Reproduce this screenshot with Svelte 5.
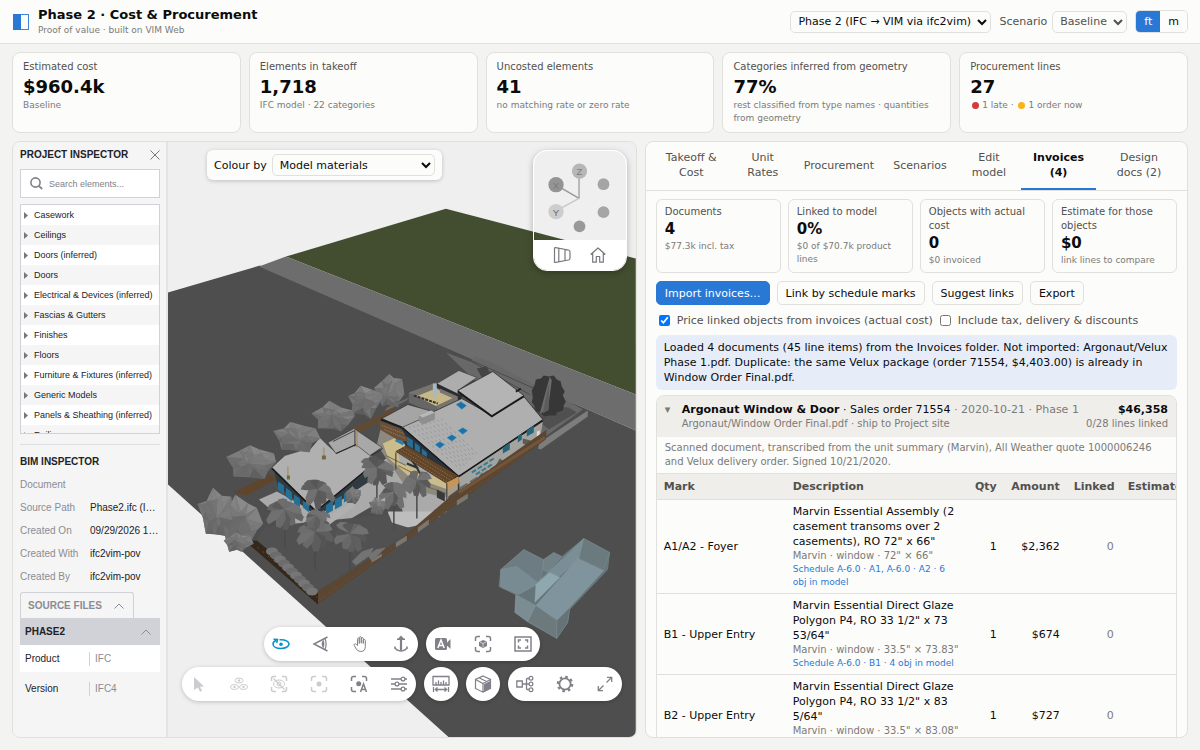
<script>
  const kpis = [
    { label: 'Estimated cost', value: '$960.4k', sub: 'Baseline' },
    { label: 'Elements in takeoff', value: '1,718', sub: 'IFC model · 22 categories' },
    { label: 'Uncosted elements', value: '41', sub: 'no matching rate or zero rate' },
    { label: 'Categories inferred from geometry', value: '77%', sub: 'rest classified from type names · quantities from geometry' },
    { label: 'Procurement lines', value: '27', flags: true }
  ];
  const tree = ['Casework', 'Ceilings', 'Doors (inferred)', 'Doors', 'Electrical & Devices (inferred)', 'Fascias & Gutters', 'Finishes', 'Floors', 'Furniture & Fixtures (inferred)', 'Generic Models', 'Panels & Sheathing (inferred)', 'Railings'];
  const bim = [
    ['Document', ''],
    ['Source Path', 'Phase2.ifc (I…'],
    ['Created On', '09/29/2026 1…'],
    ['Created With', 'ifc2vim-pov'],
    ['Created By', 'ifc2vim-pov']
  ];
  const tabs = ['Takeoff & Cost', 'Unit Rates', 'Procurement', 'Scenarios', 'Edit model', 'Invoices (4)', 'Design docs (2)'];
  const stats = [
    { label: 'Documents', value: '4', sub: '$77.3k incl. tax' },
    { label: 'Linked to model', value: '0%', sub: '$0 of $70.7k product lines' },
    { label: 'Objects with actual cost', value: '0', sub: '$0 invoiced' },
    { label: 'Estimate for those objects', value: '$0', sub: 'link lines to compare' }
  ];
  const lines = [
    { mark: 'A1/A2 - Foyer', desc: 'Marvin Essential Assembly (2 casement transoms over 2 casements), RO 72" x 66"', meta: 'Marvin · window · 72" × 66"', link: 'Schedule A-6.0 · A1, A-6.0 · A2 · 6 obj in model', qty: 1, amount: '$2,362', linked: 0 },
    { mark: 'B1 - Upper Entry', desc: 'Marvin Essential Direct Glaze Polygon P4, RO 33 1/2" x 73 53/64"', meta: 'Marvin · window · 33.5" × 73.83"', link: 'Schedule A-6.0 · B1 · 4 obj in model', qty: 1, amount: '$674', linked: 0 },
    { mark: 'B2 - Upper Entry', desc: 'Marvin Essential Direct Glaze Polygon P4, RO 33 1/2" x 83 5/64"', meta: 'Marvin · window · 33.5" × 83.08"', link: '', qty: 1, amount: '$727', linked: 0 }
  ];

  // Small deterministic generator so the planting is the same on every load.
  function rng(seed) {
    let s = seed;
    return () => {
      s = (s * 16807) % 2147483647;
      return s / 2147483647;
    };
  }
  const grey = (v) => `rgb(${v},${v},${v})`;
  const toPoints = (pts) => pts.map((p) => p.map((v) => v.toFixed(1)).join(',')).join(' ');

  function shrub(cx, cy, rx, ry, seed) {
    const r = rng(seed * 7919);
    const n = 11;
    const hub = [cx + (r() - 0.5) * rx * 0.6, cy + (r() - 0.5) * ry * 0.6];
    const ring = [];
    const mid = [];
    for (let i = 0; i < n; i++) {
      const a = (i / n) * Math.PI * 2 + (r() - 0.5) * 0.35;
      const k = i % 2 ? 0.72 + r() * 0.15 : 0.95 + r() * 0.2;
      const m = 0.3 + r() * 0.4;
      ring.push([cx + Math.cos(a) * rx * k, cy + Math.sin(a) * ry * k]);
      mid.push([cx + Math.cos(a + 0.3) * rx * m, cy + Math.sin(a + 0.3) * ry * m]);
    }
    const out = [{ pts: toPoints(ring), fill: grey(104) }];
    const add = (pts, dy) => out.push({ pts: toPoints(pts), fill: grey(Math.round(108 + r() * 16 - dy * 16)) });
    for (let i = 0; i < n; i++) {
      const j = (i + 1) % n;
      const dy = Math.sin((i / n) * Math.PI * 2);
      add([ring[i], ring[j], mid[i]], dy);
      add([mid[i], ring[j], mid[j]], dy * 0.7);
      add([mid[i], mid[j], hub], dy * 0.4);
    }
    return out;
  }

  function palm(cx, cy, rad, seed) {
    const r = rng(seed * 104729);
    const out = [];
    for (let i = 0; i < 10; i++) {
      const a = (i / 10) * Math.PI * 2 + r() * 0.5;
      const l = rad * (0.7 + r() * 0.35);
      const w = rad * 0.26;
      const tx = cx + Math.cos(a) * l;
      const ty = cy + Math.sin(a) * l * 0.85 + 4;
      const mx = cx + Math.cos(a) * l * 0.6;
      const my = cy + Math.sin(a) * l * 0.5;
      const nx = -Math.sin(a) * w;
      const ny = Math.cos(a) * w;
      out.push({
        pts: toPoints([[cx, cy], [mx + nx, my + ny], [tx + nx * 0.5, ty + ny * 0.5], [tx - nx * 0.5, ty - ny * 0.5], [mx - nx, my - ny]]),
        fill: grey(Math.round(84 + r() * 32))
      });
    }
    return out;
  }

  const shrubs = [
    ...shrub(390, 392, 15, 18, 3), ...shrub(365, 402, 17, 17, 8), ...shrub(334, 418, 21, 15, 5),
    ...shrub(296, 438, 23, 15, 12), ...shrub(252, 463, 25, 18, 21), ...shrub(216, 514, 17, 25, 9),
    ...shrub(240, 522, 22, 24, 31), ...shrub(238, 543, 14, 10, 17), ...shrub(353, 496, 8, 9, 40), ...shrub(378, 507, 9, 9, 41)
  ];
  const palmSpots = [[377, 468, 19], [417, 481, 17], [394, 492, 17], [318, 490, 18], [285, 510, 20], [315, 532, 21], [350, 534, 20], [316, 516, 14]];
  const palms = palmSpots.flatMap(([x, y, s], i) => palm(x, y, s, i + 3));
  const hedge = Array.from({ length: 11 }, (_, i) => [272 + i * 4, 552 + i * 4]);
  const roofRows = Array.from({ length: 9 }, (_, i) => i);
</script>

<div class="page">
  <header>
    <svg class="logo" viewBox="0 0 16 16" aria-hidden="true"><rect x="0.5" y="0.5" width="15" height="15" fill="#fcfcfb" stroke="#3f83d8" /><rect width="8" height="16" fill="#2a78d6" /></svg>
    <div class="brand">
      <h1>Phase 2 · Cost &amp; Procurement</h1>
      <p>Proof of value · built on VIM Web</p>
    </div>
    <select class="model" aria-label="Model"><option>Phase 2 (IFC → VIM via ifc2vim)</option></select>
    <div class="scenario">
      <label for="scenario">Scenario</label>
      <select id="scenario"><option>Baseline</option></select>
    </div>
    <div class="units"><button class="on">ft</button><button>m</button></div>
  </header>

  <section class="kpis">
    {#each kpis as k}
      <article class="card kpi">
        <div class="label">{k.label}</div>
        <div class="value">{k.value}</div>
        {#if k.flags}
          <div class="sub"><i class="dot late"></i>1 late · <i class="dot soon"></i>1 order now</div>
        {:else}
          <div class="sub">{k.sub}</div>
        {/if}
      </article>
    {/each}
  </section>

  <main>
    <section class="viewer">
      <aside>
        <div class="head">
          <h2>PROJECT INSPECTOR</h2>
          <button aria-label="Close"><svg width="10" height="10" viewBox="0 0 10 10"><path d="M0.5 0.5l9 9M9.5 0.5l-9 9" stroke="#77787d" fill="none" /></svg></button>
        </div>
        <label class="search">
          <svg width="13" height="13" viewBox="0 0 13 13"><circle cx="5.5" cy="5.5" r="4.6" fill="none" stroke="#808188" stroke-width="1.6" /><path d="M8.8 8.8l3.4 3.2" stroke="#808188" stroke-width="1.8" /></svg>
          <input type="text" placeholder="Search elements..." aria-label="Search elements" />
        </label>
        <ul class="tree">
          {#each tree as t}
            <li><svg width="4" height="7" viewBox="0 0 4 7"><path d="M0 0l4 3.5L0 7z" fill="#77787d" /></svg>{t}</li>
          {/each}
        </ul>
        <hr />
        <h2 class="bimtitle">BIM INSPECTOR</h2>
        <dl>
          {#each bim as [k, v]}
            <dt>{k}</dt><dd>{v}</dd>
          {/each}
        </dl>
        <button class="files">SOURCE FILES <svg width="10" height="6" viewBox="0 0 10 6"><path d="M0.5 5.5L5 1l4.500 4.500" fill="none" stroke="#8b8c92" /></svg></button>
        <button class="group">PHASE2 <svg width="10" height="6" viewBox="0 0 10 6"><path d="M0.500 5.500L5 1l4.500 4.500" fill="none" stroke="#8b8c92" /></svg></button>
        <div class="prop white"><span>Product</span><span>IFC</span></div>
        <div class="prop"><span>Version</span><span>IFC4</span></div>
      </aside>

      <div class="canvas">
        <svg class="scene" viewBox="168 142 468 596" preserveAspectRatio="xMidYMid slice" aria-label="3D model">
          <rect x="0" y="0" width="1200" height="900" fill="#efefef" />
          <path d="M168 293L260 266L636 431V738H449L168 485z" fill="#4e4e4e" />
          <path d="M286 257L446 209L636 259V395z" fill="#434e30" />
          <path d="M259 267L286 257L636 395V431z" fill="#6d6d6d" />
          <path d="M446 353l24 9 6-5 20 8 40 21 30 14 17 10-47 34-12-8 30-20-80-36z" fill="#686868" />
          <path d="M449 351l90 40M470 361l60 34" stroke="#4b4b4b" fill="none" />
          <path d="M588 411L540 443l-2 6 3 1 47-33z" fill="#7d7d7d" />
          <path d="M545 406l24 2 8 5-28 17-12-10z" fill="#505050" />
          <!-- rear fences -->
          <path d="M233 493L270 475l8 4-31 17z" fill="#5f452c" />
          <path d="M350 430L381 415l10-7 6 4-38 22z" fill="#604a34" />
          <path d="M385 412l22-11 2-3-22 10z" fill="#706a62" />
          <!-- paving around the buildings -->
          <path d="M259 500l18-8 40 22 40-26 40-40 30 10 22 34-2 20-22 12q-16 5-20-6l-5-14-30 4-34 20-22-4-20 6z" fill="#aaaaaa" />
          <path d="M388 512l54 0-2 5-24 11q-16 2-26-6z" fill="#bdbdbd" />
          <!-- upper terrace -->
          <path d="M409 393L436 383l27 13-7 10-22 8-25-13z" fill="#77736d" />
          <path d="M416 397l20-8 18 9-19 9z" fill="#c6b887" />
          <path d="M409 393l28 14v9l-28-13z" fill="#666" />
          <path d="M414 396l24 8" stroke="#333" stroke-width="2" stroke-dasharray="3 1" />
          <path d="M433 384h4v14h-4z" fill="#a5b8c4" />
          <!-- back wing -->
          <path d="M437 384l22-13 18 7-19 13 1 8z" fill="#adadad" stroke="#292929" stroke-width="0.5" />
          <path d="M437 384l23 11 3 1-3 6-23-14z" fill="#2c2c2c" />
          <path d="M440 389l18 8v4l-18-8z" fill="#777" />
          <!-- courtyard -->
          <path d="M382 424l22 8 5 15-12 6 2 14 54 22-8 9-38-9-22-32-8-12z" fill="#8d897e" />
          <path d="M383 444l13-6 13 6-11 7 2 12 48 20v7l-40-14-20-18z" fill="#cbbd8b" />
          <path d="M386 456l20 10M398 466l18 9M424 486l22 8" stroke="#77663d" />
          <path d="M396 440l8 4" stroke="#2d7eb5" stroke-width="4" />
          <path d="M407 464l10 4 3 6M412 461l6 8" stroke="#303030" stroke-width="2" fill="none" />
          <!-- main roof -->
          <path d="M401 428l58 49v14l-48-35-12-22z" fill="#263541" />
          <path d="M407 437l6 4v9l-6-5zM415 443l5 4v8l-5-4zM422 449l5 4v6l-5-4z" fill="#286f97" />
          <path d="M459 477l84-55-3 19-80 49z" fill="#a3a49f" />
          <path d="M402 427L462 399l30 17 32-19 19 23-84 57z" fill="#afafaf" stroke="#202020" stroke-width="0.7" />
          <path d="M402 428L459 477L543 421" stroke="#1a1a1a" stroke-width="1.500" fill="none" />
          <path d="M458 391l35-19 31 24-32 20z" fill="#b4b4b4" stroke="#202020" stroke-width="0.700" />
          <path d="M458 392l34 25 32-20" stroke="#181818" stroke-width="1.600" fill="none" />
          <path d="M516 392l5-3" stroke="#222" stroke-width="2" />
          {#each roofRows as i}
            <path d={`M${409 + i * 4} ${427 - i}L${461 + i * 2} ${470 - i * 2}`} stroke="#8d8d8d" stroke-width="0.700" stroke-dasharray="3 3" fill="none" />
          {/each}
          <path d="M456 405l5-3 6 4-5 4zM458 431l5-3 5 3-5 4zM447 438l5-3 5 3-5 4zM435 445l5-3 5 3-5 4z" fill="#216fa3" stroke="#65b4d8" stroke-width="0.500" />
          <!-- front windows -->
          <path d="M527 431l7-5v7l-7 4zM503 448l7-5v7l-7 4zM518 437l4-3v6l-4 3z" fill="#24677c" />
          <path d="M472 473l22-14M476 475l16-10" stroke="#347d94" stroke-width="2" stroke-dasharray="5 2" />
          <path d="M460 489l78-48" stroke="#6b6963" stroke-width="2" stroke-dasharray="9 3" />
          <path d="M476 481l6-8 3 5zM494 469l6-10 6 4zM523 444l8 4v-7l-8-2z" fill="#5d5d55" />
          <path d="M537 432l3-1v7h-3z" fill="#ddd" />
          <!-- side roof and chimney -->
          <path d="M382 419L408 405l25 7-13 8-18 8z" fill="#a5a5a5" stroke="#222" stroke-width="0.600" />
          <path d="M381 420l21 8" stroke="#1c1c1c" stroke-width="2" />
          <path d="M419 416l12-5 4 2v7l-12 5-4-3z" fill="#8f8f8f" /><path d="M419 416l12-5 4 2-12 5z" fill="#b8b8b8" />
          <!-- pergolas -->
          <path d="M380 422l22 8 8 13-13-3-17-10z" fill="#6b5038" />
          <path d="M382 426l22 8M384 430l22 9" stroke="#ab8962" stroke-width="0.800" stroke-dasharray="1 1" />
          <path d="M396 452l11-6 51 30-11 8z" fill="#604529" stroke="#3a2a1c" stroke-width="0.600" />
          <path d="M398 452l50 31M401 450l50 31M404 448l50 31" stroke="#8d6b49" stroke-width="1" stroke-dasharray="1.500 1.300" />
          <path d="M447 484l11-7v13l-11 8z" fill="#aa9c85" /><path d="M447 483l12-6v7l-12 5z" fill="#c99556" />
          <path d="M396 453v17M447 484v26" stroke="#333" />
          <path d="M437 490l8 4v8l-8-4z" fill="#38393a" />
          <!-- second building -->
          <path d="M274 471l43 40 54-42v12l-48 32-10 1-35-27z" fill="#303b41" />
          <path d="M278 482l6 4v9l-6-5zM286 488l6 5v9l-6-5zM294 495l6 4v9l-6-4zM303 501l6 4v8l-6-5zM326 506l7-5v10l-7 4zM335 500l7-4v10l-7 4zM344 494l8-5v10l-8 4z" fill="#266f97" />
          <path d="M272 468l13-12 20-6 5 0 10-12 8 8 9 8 20-9 17 12-4 11-53 44z" fill="#b0b0b0" stroke="#333" stroke-width="0.500" />
          <path d="M272 469l44 43 55-45" stroke="#191919" stroke-width="1.600" fill="none" />
          <path d="M328 443l26-14 28 19-12 8-14-11-20 9z" fill="#a8a8a8" stroke="#333" stroke-width="0.600" />
          <path d="M333 442l22-11v16M356 445l-20 9M370 457l13-8" stroke="#222" fill="none" stroke-width="0.800" />
          <path d="M324 448v10M288 467v12M357 432v16" stroke="#a18e60" stroke-width="1.200" />
          <path d="M322 456h4v4h-4zM287 476h3v4h-3z" fill="#756840" />
          <!-- lawn and street fences -->
          <path d="M256 541L265 527l62-6 62-6 3 8 16 5 14-3-104 66z" fill="#515151" />
          <path d="M323 520l32-20 2 5-30 22z" fill="#b0b0b0" />
          <path d="M447 500l100-70-1 10-228 165v-13l80-50z" fill="#5b4632" />
          <path d="M459 493l86-55" stroke="#74553a" stroke-width="3" />
          <path d="M318 602l228-164" stroke="#7b624a" stroke-width="0.600" stroke-dasharray="1 2" />
          <path d="M396 543l11-7v5l-11 7zM418 528l11-8v5l-11 8zM457 501l11-7v5l-11 7zM372 560l10-6v3l-10 6z" fill="#7c776e" />
          <path d="M250 541h7l61 51v13L249 545z" fill="#352719" />
          <path d="M252 543l65 55" stroke="#5a5047" stroke-dasharray="2 5" />
          {#each hedge as [x, y], i}
            <ellipse cx={x} cy={y} rx="6" ry="4" fill={i % 2 ? '#6c6c6c' : '#767676'} />
          {/each}
          <path d="M352 562l10-10 12-4-4 8-14 10zM368 556l8-6 10-2-14 14z" fill="#737373" />
          {#each palmSpots as [x, y]}
            <path d={`M${x} ${y}v38`} stroke="#4a4a4a" stroke-width="1.500" />
          {/each}
          {#each shrubs as f}<polygon points={f.pts} fill={f.fill} />{/each}
          {#each palms as f}<polygon points={f.pts} fill={f.fill} />{/each}
          <!-- street tree -->
          <path d="M532 391l3-6 1-5 5-1 3-3 5 1 5-1 3 4 4 2 1 5 3 5-2 4 3 6-2 4-1 5-6 2-1 3-7 0-5 1-3-4-5-1-1-5-3-4 1-5z" fill="#373737" />
          <path d="M550 377l-10 37 8-3 4-30z" fill="#6b6b6b" /><path d="M549 384l-6 30 6-4z" fill="#5c5c5c" />
          <path d="M477 369l10-2 3 7-8 4z" fill="#444" />
          <!-- ghosted massing -->
          <g stroke="#9db0b6" stroke-width="0.500" stroke-opacity="0.400">
            <path d="M501 570l23-20 20 10 10-7 8 4 22-18 26 14-2 17-38 40-2 13-11 16-30-17-12-9 1-18-17-8z" fill="#66757a" />
            <path d="M524 550l20 11-3 19-17 7-8 8-15-7v-18z" fill="#6c7c82" />
            <path d="M501 570l16-3 22 17-20 11-18-8z" fill="#788b92" />
            <path d="M538 583l46-44-5 20-42 39z" fill="#7a8e95" />
            <path d="M578 559l26 12-46 50-22-15z" fill="#7f949c" />
            <path d="M584 539l26 14-6 18-25-12z" fill="#6b7a7f" />
            <path d="M536 585l14-12 10 5-25 25z" fill="#8fa7ae" />
            <path d="M516 595l20 11-8 16-13-9z" fill="#7b8d93" />
            <path d="M536 606l21 15v18l-29-17z" fill="#6c797d" />
            <path d="M557 621l13-13-2 15-11 16z" fill="#657377" />
            <path d="M544 560l10-7 8 4-14 16-5-3z" fill="#718287" />
          </g>
        </svg>

        <label class="colour">Colour by
          <select><option>Model materials</option></select>
        </label>

        <div class="gizmo">
          <svg viewBox="533 151 94 90" class="axes" aria-label="Axes">
            <path d="M579 199V171" stroke="#a6a6a6" stroke-width="1.500" /><path d="M579 199L555 185" stroke="#999" stroke-width="1.500" /><path d="M579 199L555 212" stroke="#c8c8c8" stroke-width="1.500" />
            <circle cx="579.500" cy="171" r="7.800" fill="#b7b7b7" /><circle cx="555.500" cy="185" r="7.800" fill="#949494" /><circle cx="555.500" cy="212.500" r="7.800" fill="#cdcdcd" />
            <circle cx="604" cy="184.500" r="6" fill="#a5a5a5" /><circle cx="604" cy="213" r="6" fill="#a5a5a5" /><circle cx="579.500" cy="227.500" r="6" fill="#999" />
            <text x="579.500" y="175" fill="#7b7b7b">Z</text><text x="555.500" y="189" fill="#7b7b7b">X</text><text x="555.500" y="216.500" fill="#6a6a6a">Y</text>
          </svg>
          <div class="views">
            <button aria-label="Projection"><svg width="18" height="16" viewBox="0 0 18 16"><path d="M1.500 1.500Q1 .6 2.500.7L15.500 3q1.500.4 1.500 2v6q0 1.600-1.500 2L2.500 15.300Q1 15.400 1.500 14zM5.800 1.500v13M12 2.800v10.500" /></svg></button>
            <button aria-label="Home"><svg width="16" height="16" viewBox="0 0 16 16"><path d="M.7 7.500L8 1l7.300 6.500M2.700 6v9.200h3.600V9.500h3.400v5.700h3.600V6" /></svg></button>
          </div>
        </div>

        <div class="tools">
          <div class="row">
            <div class="pill">
              <button aria-label="Orbit"><svg class="blue" viewBox="0 0 18 18"><path d="M4.500 5.200C2.300 6 1 7.400 1 9 1 11.800 4.600 13.500 9 13.500s8-1.800 8-4.400S13.400 4.700 9 4.700H7.500" stroke-width="1.500" /><path d="M1.500 4.200l4 .3-.8 3.500" stroke-width="1.500" /><circle class="f" cx="9" cy="9.200" r="1.700" /></svg></button>
              <button aria-label="Look"><svg viewBox="0 0 18 18"><path d="M15.500 2L2 9l13.500 7" stroke-width="1.500" /><path class="f" d="M11.300 4.500q2.200 4.500 0 9-3.200-4.500 0-9z" /><path d="M13 3.700q2.200 5.300 0 10.600" stroke-width="1.200" /></svg></button>
              <button aria-label="Pan"><svg viewBox="0 0 18 18"><path d="M5.500 10.500V4.200q0-1 .9-1t.9 1V8.500V2.700q0-1 1-1t1 1v5.500V3.500q0-1 1-1t1 1v5V5.500q0-1 1-1t1 1V11.500q0 5-4.500 5-3 0-4.500-2.500L2.300 10.500q-.6-1 .3-1.500t1.600.3z" /></svg></button>
              <button aria-label="Zoom"><svg viewBox="0 0 18 18"><path d="M9 2.500v13" stroke-width="2.200" /><path d="M5 4.300h8M6.500 4.300L9 1.700l2.500 2.600M3 12.500q1 3 6 3.500 5-.5 6-3.500M3 11.500v2.500M15 11.500v2.500" stroke-width="1.500" /></svg></button>
            </div>
            <div class="pill">
              <button aria-label="Auto camera"><svg viewBox="0 0 18 18"><rect class="f" x="1" y="3" width="12" height="12" rx="1.500" /><path class="f" d="M13 7.500L16.500 4v10L13 10.500z" /><path class="cut" d="M3.800 13L7 5l3.200 8M5 10.500h4" stroke-width="1.500" /></svg></button>
              <button aria-label="Frame selection"><svg viewBox="0 0 18 18"><path d="M1.500 6V3.500q0-2 2-2H6M12 1.500h2.500q2 0 2 2V6M16.500 12v2.500q0 2-2 2H12M6 16.500H3.500q-2 0-2-2V12" stroke-width="1.500" /><path class="f" d="M5 7l4-2 4 1.500v4.500L9 13l-4-2z" /><path class="cut" d="M9 8.500V12M6 7l3 1.500 4-2" stroke-width=".6" /></svg></button>
              <button aria-label="Frame scene"><svg viewBox="0 0 18 18"><path d="M1 2h16v14H1z" stroke-width="1.500" /><path d="M4.500 7.500V5H7M11 5h2.500v2.500M13.500 10.500V13H11M7 13H4.500v-2.500" stroke-width="1.500" /></svg></button>
            </div>
          </div>
          <div class="row">
            <div class="pill">
              <button disabled aria-label="Select"><svg viewBox="0 0 18 18"><path class="f" d="M4 2l10 9.500-4 .3 2 4-2 1-2-4.200L4 15z" /></svg></button>
              <button disabled aria-label="Show"><svg viewBox="0 0 18 18"><ellipse cx="9" cy="5.500" rx="4" ry="2.500" /><ellipse cx="4.500" cy="12" rx="4" ry="2.500" /><ellipse cx="13.500" cy="12" rx="4" ry="2.500" /><circle class="f" cx="9" cy="5.500" r="1.200" /><circle class="f" cx="4.500" cy="12" r="1.200" /><circle class="f" cx="13.500" cy="12" r="1.200" /></svg></button>
              <button disabled aria-label="Hide"><svg viewBox="0 0 18 18"><path d="M1.500 6V3.500q0-2 2-2H6M12 1.500h2.500q2 0 2 2V6M16.500 12v2.500q0 2-2 2H12M6 16.500H3.500q-2 0-2-2V12" stroke-width="1.500" /><ellipse cx="9" cy="9" rx="5.500" ry="4" /><circle cx="9" cy="9" r="2" /><path d="M3.500 3.500l11 11" stroke-width="1.300" /></svg></button>
              <button disabled aria-label="Focus"><svg viewBox="0 0 18 18"><path d="M1.500 6V3.500q0-2 2-2H6M12 1.500h2.500q2 0 2 2V6M16.500 12v2.500q0 2-2 2H12M6 16.500H3.500q-2 0-2-2V12" stroke-width="1.500" /><circle class="f" cx="9" cy="9" r="2.500" /></svg></button>
              <button aria-label="Auto focus"><svg viewBox="0 0 18 18"><path d="M1.500 6V3.500q0-2 2-2H6M12 1.500h2.500q2 0 2 2V6M6 16.500H3.500q-2 0-2-2V12" stroke-width="1.500" /><circle class="f" cx="8.700" cy="8.700" r="2.500" /><path d="M10.500 17l3-8 3 8M11.500 14.500h4" stroke-width="1.500" /></svg></button>
              <button aria-label="Filters"><svg viewBox="0 0 18 18"><path d="M1 4h10M15 4h2M1 9h4M9 9h8M1 14h10M15 14h2" stroke-width="1.600" /><circle cx="13" cy="4" r="1.900" stroke-width="1.300" /><circle cx="7" cy="9" r="1.900" stroke-width="1.300" /><circle cx="13" cy="14" r="1.900" stroke-width="1.300" /></svg></button>
            </div>
            <div class="pill">
              <button aria-label="Measure"><svg viewBox="0 0 18 18"><path d="M1 1.500h16v8.500H1zM4 10V7M6.500 10V5.500M9 10V7M11.500 10V5.500M14 10V7M1.500 12v5M16.500 12v5M3 14.500h12M5.500 12.500l-2.200 2 2.200 2M12.500 12.500l2.200 2-2.200 2" stroke-width="1.300" /></svg></button>
            </div>
            <div class="pill">
              <button aria-label="Section box"><svg viewBox="0 0 18 18"><path d="M9 1l7.500 3.500v9L9 17.200 1.500 13.500v-9zM1.500 4.500L9 8.500l7.500-4M9 8.500V17M5.500 3l7 3.500" stroke-width="1.200" /><path class="f" d="M10 9.300l6.500-3.600v7.800L10 16.700z" /></svg></button>
            </div>
            <div class="pill">
              <button aria-label="Tree"><svg viewBox="0 0 18 18"><path d="M.8 6h5.500v6H.8zM6.300 9H13M10.500 3.500v11M10.500 3.500H13M10.500 14.500H13" stroke-width="1.300" /><circle cx="15" cy="3.300" r="1.900" stroke-width="1.200" /><circle cx="15" cy="9" r="1.900" stroke-width="1.200" /><circle cx="15" cy="14.700" r="1.900" stroke-width="1.200" /></svg></button>
              <button aria-label="Settings"><svg viewBox="0 0 18 18"><circle cx="9" cy="9" r="5.600" stroke-width="1.800" /><circle cx="9" cy="9" r="7.200" stroke-width="2.200" stroke-dasharray="2.600 3.055" /></svg></button>
              <button aria-label="Full screen"><svg viewBox="0 0 18 18"><path d="M10.500 7.500L15.500 2.500M11 2.300h4.700V7M7.500 10.500L2.500 15.500M2.300 11v4.700H7" stroke-width="1.300" /></svg></button>
            </div>
          </div>
        </div>
      </div>
    </section>

    <section class="panel">
      <nav>
        {#each tabs as t}
          <button class:active={t.startsWith('Invoices')}>{t}</button>
        {/each}
      </nav>
      <div class="body">
        <div class="stats">
          {#each stats as s}
            <article class="card stat">
              <div class="label">{s.label}</div>
              <div class="value">{s.value}</div>
              <div class="sub">{s.sub}</div>
            </article>
          {/each}
        </div>
        <div class="actions">
          <button class="primary">Import invoices…</button>
          <button>Link by schedule marks</button>
          <button>Suggest links</button>
          <button>Export</button>
        </div>
        <div class="checks">
          <label><input type="checkbox" checked /> Price linked objects from invoices (actual cost)</label>
          <label><input type="checkbox" /> Include tax, delivery &amp; discounts</label>
        </div>
        <p class="info">Loaded 4 documents (45 line items) from the Invoices folder. Not imported: Argonaut/Velux Phase 1.pdf. Duplicate: the same Velux package (order 71554, $4,403.00) is already in Window Order Final.pdf.</p>
        <article class="doc">
          <div class="dochead">
            <span class="caret">▾</span>
            <div class="who">
              <div><b>Argonaut Window &amp; Door</b> · Sales order 71554 <span class="muted">· 2020-10-21 · Phase 1</span></div>
              <div class="muted small">Argonaut/Window Order Final.pdf · ship to Project site</div>
            </div>
            <div class="sum"><b>$46,358</b><div class="muted small">0/28 lines linked</div></div>
          </div>
          <p class="note">Scanned document, transcribed from the unit summary (Marvin), All Weather quote 1000006246 and Velux delivery order. Signed 10/21/2020.</p>
          <table>
            <colgroup><col class="c1" /><col class="c2" /><col class="c3" /><col class="c4" /><col class="c5" /><col class="c6" /></colgroup>
            <thead><tr><th>Mark</th><th>Description</th><th class="n">Qty</th><th class="n">Amount</th><th class="n">Linked</th><th class="n">Estimate</th></tr></thead>
            <tbody>
              {#each lines as l}
                <tr>
                  <td>{l.mark}</td>
                  <td>{l.desc}<div class="muted small">{l.meta}</div><div class="link">{l.link}</div></td>
                  <td class="n">{l.qty}</td>
                  <td class="n">{l.amount}</td>
                  <td class="n muted">{l.linked}</td>
                  <td></td>
                </tr>
              {/each}
            </tbody>
          </table>
        </article>
      </div>
    </section>
  </main>
</div>

<style>
  :global(body) { margin: 0; }
  * { box-sizing: border-box; }
  .page { height: 100vh; display: flex; flex-direction: column; background: #f3f3f1; color: #0b0b0b; font: 11px/15px "DejaVu Sans", sans-serif; overflow: hidden; }
  button, select, input { font: inherit; color: inherit; }
  button { cursor: pointer; }
  h1, h2, p, ul, dl, dd { margin: 0; padding: 0; }
  header { flex: none; height: 44px; display: flex; align-items: center; gap: 8px; padding: 0 12px; background: #fcfcfb; border-bottom: 1px solid #e1e0dd; }
  .logo { width: 18px; height: 16px; }
  .brand { flex: 1; }
  h1 { font-size: 13px; line-height: 16px; }
  .brand p { font-size: 9px; line-height: 14px; color: #7b7a77; }
  select { height: 22px; padding: 0 3px; border: 1px solid #e1e0dd; border-radius: 5px; background: #fcfcfb; }
  .scenario { display: flex; align-items: center; gap: 5px; color: #52514e; }
  .units { display: flex; height: 23px; border: 1px solid #e1e0dd; border-radius: 5px; overflow: hidden; }
  .units button { border: 0; background: #fcfcfb; padding: 0 8px; }
  .units .on { background: #2a78d6; color: #fff; }
  .card { background: #fcfcfb; border: 1px solid #e1e0dd; border-radius: 8px; }
  .kpis { flex: none; display: grid; grid-template-columns: repeat(5, 1fr); gap: 8px; padding: 8px 12px; }
  .kpi { padding: 7px 10px; }
  .label { font-size: 10px; line-height: 14px; color: #52514e; }
  .value { font-weight: 700; }
  .kpi .value { font-size: 18px; line-height: 25px; }
  .sub { font-size: 9px; line-height: 13px; color: #7b7a77; }
  .dot { display: inline-block; width: 7px; height: 7px; border-radius: 50%; margin: 0 3px 0 2px; vertical-align: -1px; }
  .late { background: #d03b3b; }
  .soon { background: #fab219; }
  main { flex: 1; min-height: 0; display: grid; grid-template-columns: 1.15fr 1fr; gap: 8px; padding: 0 12px 12px; }
  .viewer { display: flex; min-height: 0; border: 1px solid #e1e0dd; border-radius: 8px; overflow: hidden; }

  aside { width: 155px; flex: none; padding: 3px 6px 3px 7px; background: #f5f5f5; border-right: 2px solid #e4e4e4; font: 10px/20px "Liberation Sans", Arial, sans-serif; color: #212227; overflow: hidden; }
  .head { display: flex; justify-content: space-between; align-items: center; }
  .head button { border: 0; background: none; padding: 0; display: flex; }
  h2 { font-size: 10px; line-height: 20px; }
  .search { display: flex; align-items: center; gap: 6px; height: 29px; margin: 4px 0 6px; padding: 0 9px; background: #fff; border: 1px solid #d1d2d7; }
  .search svg { flex: none; }
  .search input { width: 100%; min-width: 0; border: 0; outline: 0; padding: 0; background: none; font-size: 9px; }
  .search input::placeholder { color: #808188; }
  .tree { height: 230px; overflow: hidden; list-style: none; border: 1px solid #d1d2d7; background: #fff; font-size: 9px; white-space: nowrap; }
  .tree li { display: flex; align-items: center; gap: 6px; height: 20px; padding-left: 3px; }
  .tree li:nth-child(even) { background: #f5f5f5; }
  hr { margin: 10px 0 6px; border: 0; border-top: 1px solid #dedfe2; }
  .bimtitle { line-height: 22px; }
  dl { display: grid; grid-template-columns: 70px 1fr; line-height: 23px; }
  dt { color: #8b8c92; }
  dd { white-space: nowrap; }
  .files { display: flex; align-items: center; justify-content: space-between; width: 114px; height: 26px; margin-top: 4px; padding: 0 9px 0 7px; border: 1px solid #d1d2d7; border-bottom: 0; border-radius: 3px 3px 0 0; background: none; color: #8b8c92; font-weight: 700; }
  .group { display: flex; align-items: center; justify-content: space-between; width: 100%; height: 27px; padding: 0 9px 0 5px; border: 0; background: #d1d2d7; font-weight: 700; }
  .prop { display: flex; align-items: center; height: 27px; padding-left: 5px; margin-bottom: 3px; }
  .white { background: #fff; }
  .prop span:first-child { width: 64px; }
  .prop span:last-child { line-height: 14px; padding-left: 5px; border-left: 1px solid #d1d2d7; color: #8b8c92; }

  .canvas { flex: 1; min-width: 0; position: relative; background: #efefef; }
  .scene { position: absolute; inset: 0; width: 100%; height: 100%; }
  .colour { position: absolute; left: 39px; top: 8px; height: 30px; padding: 0 7px; display: flex; align-items: center; gap: 5px; background: #fcfcfb; border-radius: 6px; box-shadow: 0 1px 4px #0003; }
  .colour select { width: 163px; }
  .gizmo { position: absolute; right: 9px; top: 8px; width: 94px; height: 121px; border-radius: 14px; border: 1px solid #fff; overflow: hidden; box-shadow: 0 2px 6px #0004; display: flex; flex-direction: column; }
  .axes { width: 100%; height: 89px; flex: none; font: 10px "Liberation Sans", sans-serif; text-anchor: middle; }
  .views { flex: 1; display: flex; justify-content: center; align-items: center; gap: 19px; background: #fff; }
  .views button { display: flex; border: 0; padding: 0; background: none; }
  .views path { fill: none; stroke: #77787d; stroke-width: 1.2; stroke-linejoin: round; }
  .tools { position: absolute; left: 0; right: 0; bottom: 36px; display: flex; flex-direction: column; align-items: center; gap: 6px; }
  .row { display: flex; gap: 8px; }
  .pill { display: flex; gap: 16px; padding: 5px; height: 34px; border-radius: 17px; background: #fff; box-shadow: 0 1px 4px #0003; }
  .pill button { width: 24px; height: 24px; border: 0; padding: 0; background: none; display: flex; align-items: center; justify-content: center; }
  .pill button:disabled { opacity: 0.4; }
  .pill svg { width: 18px; height: 18px; fill: none; stroke: #808188; stroke-width: 1; }
  .pill svg .f { fill: #808188; stroke: none; }
  .pill svg .cut { stroke: #fff; }
  .pill svg.blue { stroke: #0590cc; }
  .pill svg.blue .f { fill: #0590cc; }

  .panel { min-width: 0; min-height: 0; display: flex; flex-direction: column; background: #fcfcfb; border: 1px solid #e1e0dd; border-radius: 8px; overflow: hidden; }
  nav { flex: none; height: 49px; display: grid; grid-template-columns: 79fr 64fr 88fr 74fr 64fr 75fr 86fr; padding: 0 5px 0 6px; border-bottom: 1px solid #e1e0dd; }
  nav button { border: 0; border-bottom: 2px solid transparent; background: none; padding: 0 9px; line-height: 15px; color: #52514e; }
  nav button:last-child { padding: 0 12px; }
  nav .active { font-weight: 700; color: #0b0b0b; border-bottom-color: #2a78d6; }
  .body { flex: 1; min-height: 0; overflow: hidden; padding: 8px 10px; }
  .stats { display: grid; grid-template-columns: repeat(4, 1fr); gap: 7px; }
  .stat { padding: 5px 8px; border-radius: 6px; }
  .stat .value { font-size: 15px; line-height: 21px; }
  .actions { display: flex; gap: 7px; margin-top: 8px; }
  .actions button { height: 24px; padding: 0 8px; border: 1px solid #e1e0dd; border-radius: 5px; background: #fcfcfb; }
  .actions .primary { background: #2a78d6; border-color: #2a78d6; color: #fff; }
  .checks { display: flex; gap: 7px; height: 30px; align-items: center; color: #52514e; padding-left: 3px; }
  .checks label { display: flex; align-items: center; gap: 7px; }
  .checks input { width: 11px; height: 11px; margin: 0; }
  .info { padding: 5px 8px; border-radius: 6px; background: #e7edf8; }
  .doc { margin-top: 5px; border: 1px solid #e1e0dd; border-radius: 8px; overflow: hidden; }
  .dochead { display: flex; padding: 6px 8px; background: #f0eeeb; }
  .caret { width: 17px; color: #7b7a77; }
  .who { flex: 1; }
  .sum { text-align: right; }
  .muted { color: #7b7a77; }
  .small, .note { font-size: 10px; line-height: 14px; }
  .note { padding: 4px 8px; color: #7b7a77; }
  table { table-layout: fixed; width: 532px; border-collapse: collapse; }
  .c1 { width: 129px; } .c2 { width: 182px; } .c3 { width: 36px; } .c4 { width: 63px; } .c5 { width: 54px; } .c6 { width: 68px; }
  th { padding: 5px 7px; text-align: left; background: #f0eeeb; color: #52514e; border-top: 1px solid #e1e0dd; border-bottom: 1px solid #e1e0dd; }
  td { padding: 4px 7px; border-bottom: 1px solid #e1e0dd; }
  th.n, td.n { text-align: right; }
  .link { min-height: 13px; font-size: 9px; line-height: 13px; color: #2a78d6; }
</style>
